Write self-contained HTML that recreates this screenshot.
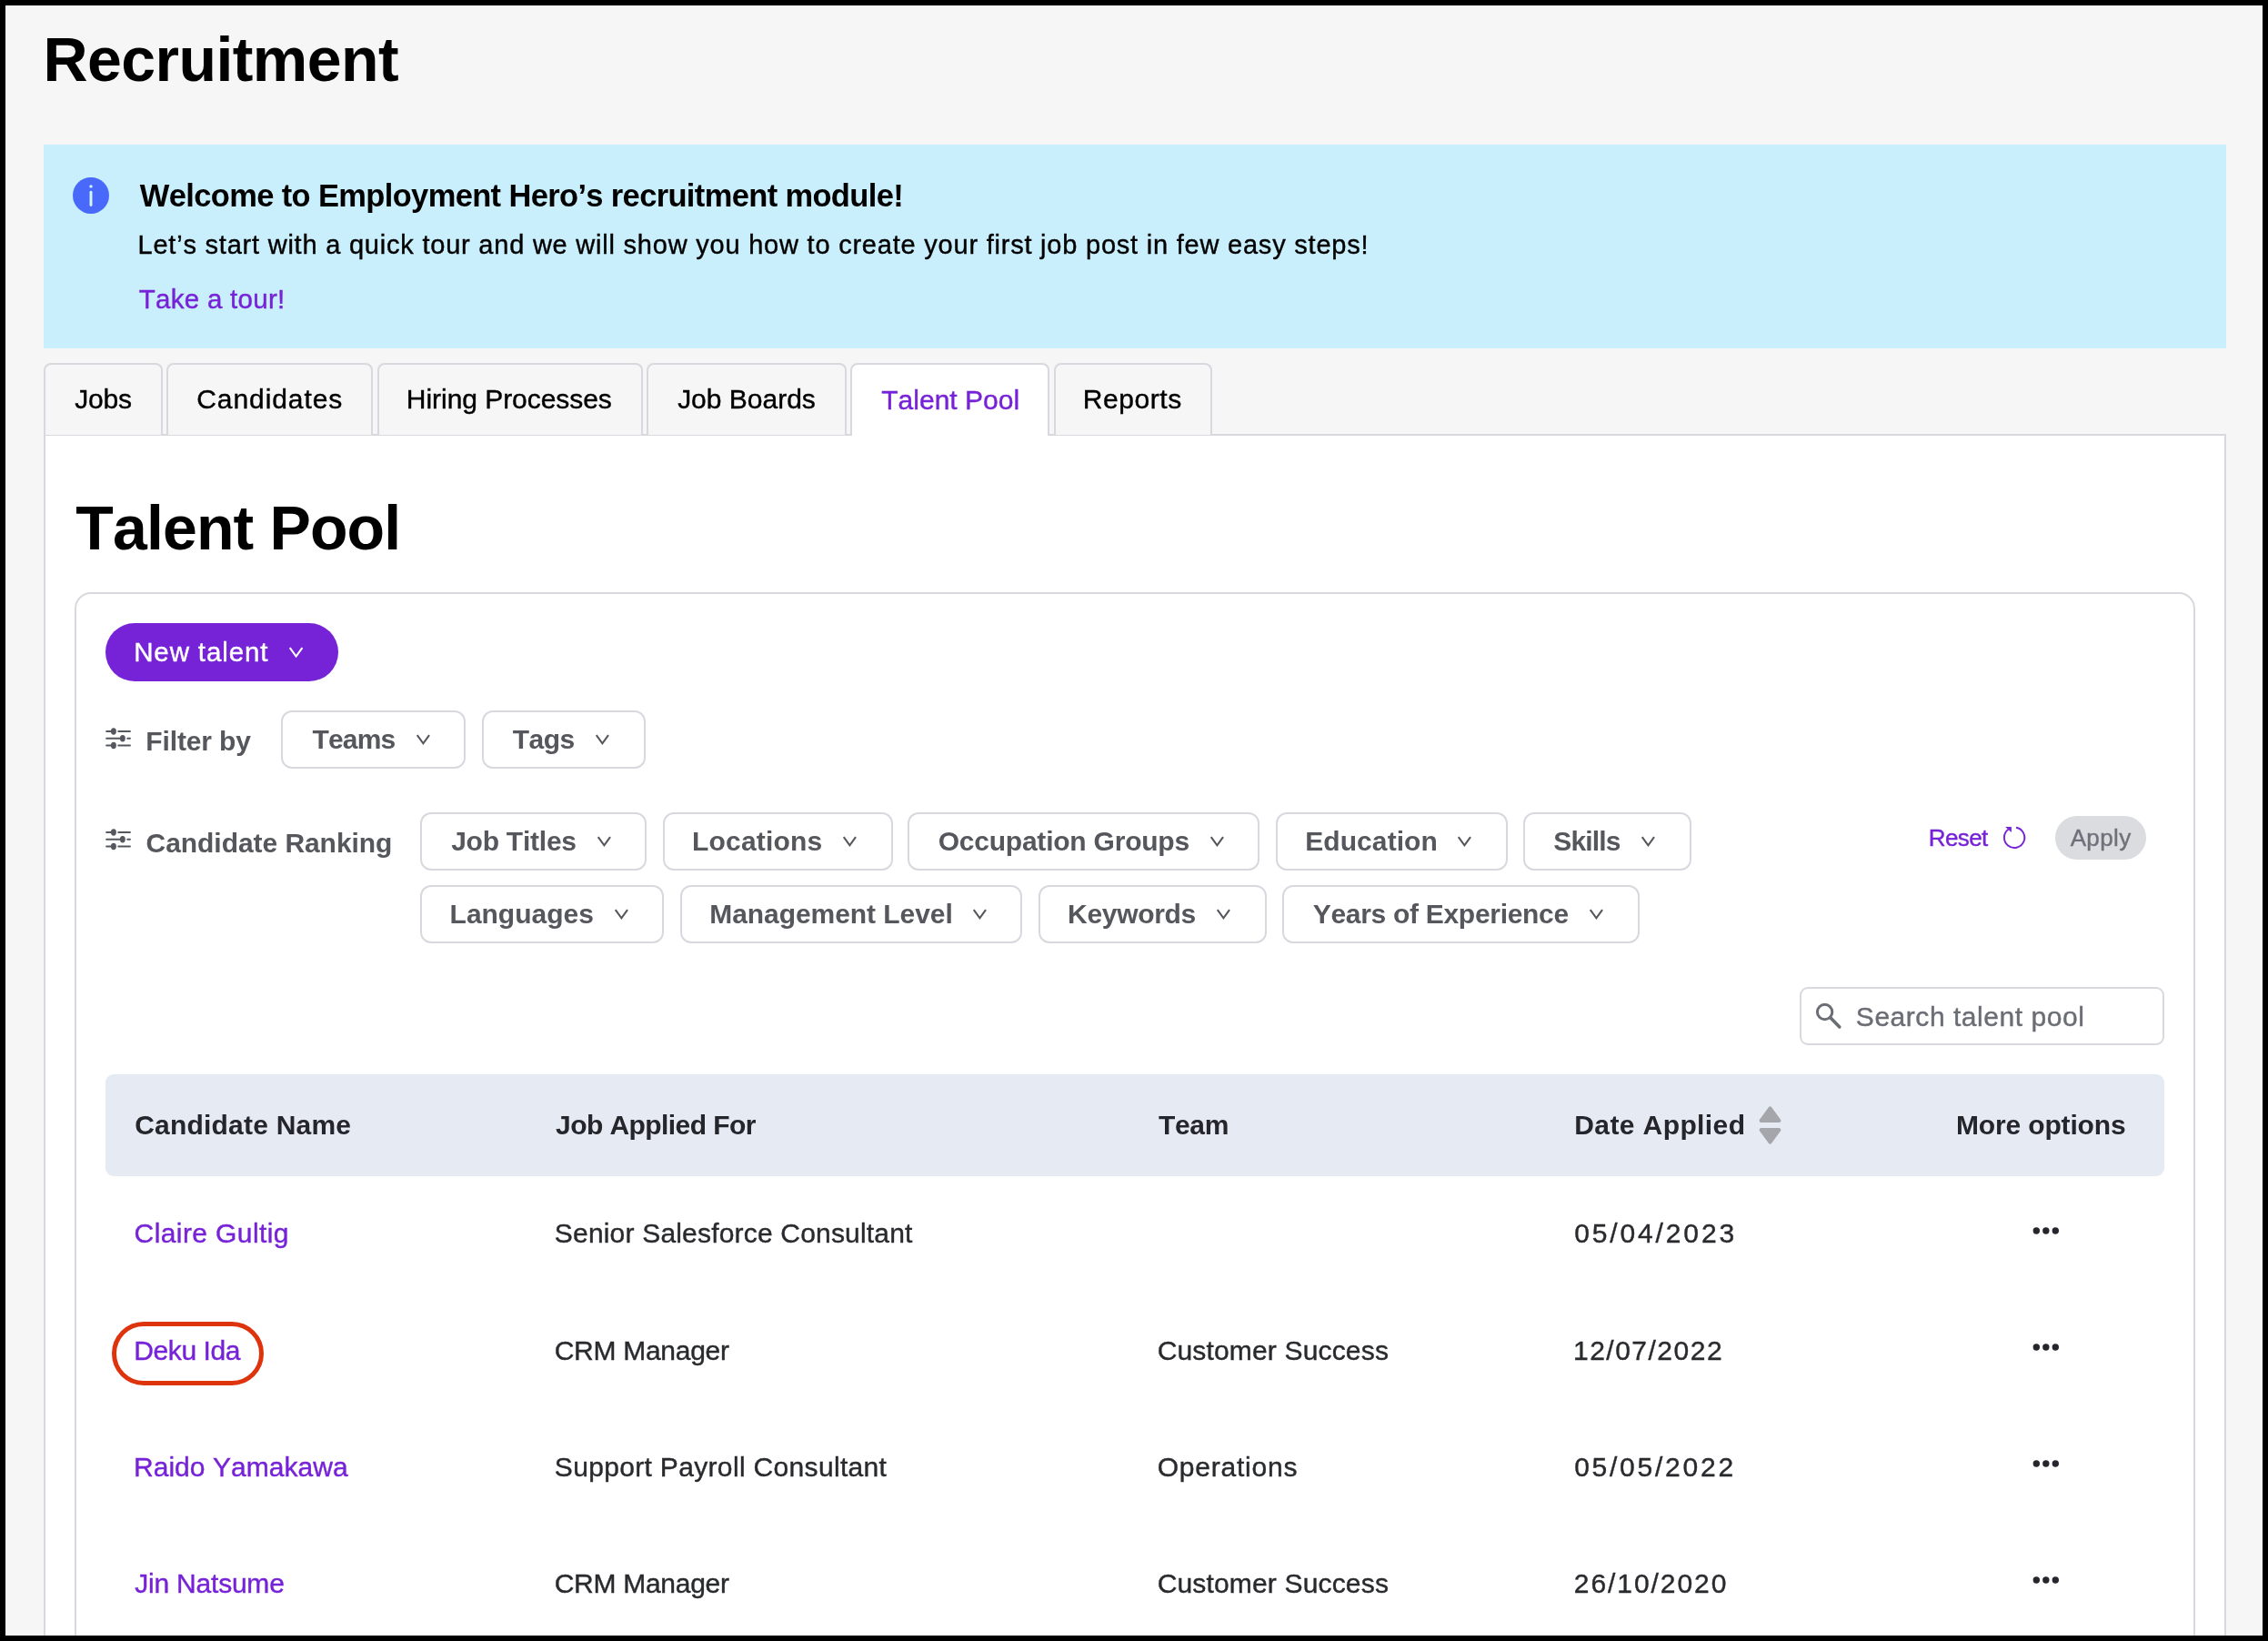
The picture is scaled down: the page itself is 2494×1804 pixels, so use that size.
<!DOCTYPE html>
<html lang="en"><head><meta charset="utf-8"><title>Recruitment - Talent Pool</title>
<style>
html,body{margin:0;padding:0;background:#000;}
body{width:2494px;height:1804px;position:relative;overflow:hidden;font-family:"Liberation Sans",sans-serif;font-kerning:none;}
.t{position:absolute;white-space:nowrap;line-height:1;font-kerning:none;margin:0;padding:0;font-weight:400;display:block;}
.b{position:absolute;display:block;}
#clip{position:absolute;left:6px;top:6px;width:2482px;height:1792px;overflow:hidden;}
#clip>#in{position:absolute;left:-6px;top:-6px;width:2494px;height:1804px;will-change:transform;}
</style></head><body><div id="clip"><div id="in">
<div class="b" style="left:6px;top:6px;width:2482px;height:1792px;background:#f6f6f6;"></div>
<h1 class="t" style="left:47.45px;top:31.00px;font-size:68px;font-weight:700;color:#000;letter-spacing:-0.557px;">Recruitment</h1>
<div class="b" style="left:48px;top:159px;width:2400px;height:224px;background:#c9eefc;"></div>
<svg class="b" style="left:80px;top:195px" width="40" height="40" viewBox="0 0 40 40"><circle cx="20" cy="19.9" r="20" fill="#4869fa"/><circle cx="20" cy="9.9" r="1.7" fill="#d6f8ff"/><rect x="18.55" y="14.8" width="2.9" height="17.2" rx="1.45" fill="#d6f8ff"/></svg>
<span class="t" style="left:153.87px;top:198.00px;font-size:34.5px;font-weight:700;color:#000;letter-spacing:-0.649px;">Welcome to Employment Hero’s recruitment module!</span>
<span class="t" style="left:151.52px;top:255.00px;font-size:29px;-webkit-text-stroke:0.4px;color:#000;letter-spacing:0.781px;">Let’s start with a quick tour and we will show you how to create your first job post in few easy steps!</span>
<a class="t" style="left:152.74px;top:314.00px;font-size:29.5px;-webkit-text-stroke:0.4px;color:#7622d7;letter-spacing:0.285px;">Take a tour!</a>
<div class="b" style="left:48px;top:477.1px;width:2400px;height:1330px;background:#fff;border:2px solid #d8d9de;box-sizing:border-box;"></div>
<div class="b" style="left:48px;top:399.2px;width:130.8px;height:78.5px;background:#f6f6f6;border:2px solid #d8d9de;border-bottom:none;border-radius:8px 8px 0 0;box-sizing:border-box;"></div>
<span class="t" style="left:82.33px;top:424.00px;font-size:30px;-webkit-text-stroke:0.4px;color:#000;letter-spacing:-0.272px;">Jobs</span>
<div class="b" style="left:183px;top:399.2px;width:227.2px;height:78.5px;background:#f6f6f6;border:2px solid #d8d9de;border-bottom:none;border-radius:8px 8px 0 0;box-sizing:border-box;"></div>
<span class="t" style="left:216.28px;top:424.00px;font-size:30px;-webkit-text-stroke:0.4px;color:#000;letter-spacing:0.915px;">Candidates</span>
<div class="b" style="left:414.5px;top:399.2px;width:292.29999999999995px;height:78.5px;background:#f6f6f6;border:2px solid #d8d9de;border-bottom:none;border-radius:8px 8px 0 0;box-sizing:border-box;"></div>
<span class="t" style="left:446.84px;top:424.00px;font-size:30px;-webkit-text-stroke:0.4px;color:#000;letter-spacing:-0.047px;">Hiring Processes</span>
<div class="b" style="left:710.8px;top:399.2px;width:220.0px;height:78.5px;background:#f6f6f6;border:2px solid #d8d9de;border-bottom:none;border-radius:8px 8px 0 0;box-sizing:border-box;"></div>
<span class="t" style="left:745.13px;top:424.00px;font-size:30px;-webkit-text-stroke:0.4px;color:#000;letter-spacing:-0.001px;">Job Boards</span>
<div class="b" style="left:935.1px;top:399.2px;width:219.10000000000002px;height:80px;background:#fff;border:2px solid #d8d9de;border-bottom:none;border-radius:8px 8px 0 0;box-sizing:border-box;"></div>
<span class="t" style="left:969.23px;top:425.00px;font-size:30px;-webkit-text-stroke:0.4px;color:#7622d7;letter-spacing:0.022px;">Talent Pool</span>
<div class="b" style="left:1158.5px;top:399.2px;width:174.70000000000005px;height:78.5px;background:#f6f6f6;border:2px solid #d8d9de;border-bottom:none;border-radius:8px 8px 0 0;box-sizing:border-box;"></div>
<span class="t" style="left:1190.84px;top:424.00px;font-size:30px;-webkit-text-stroke:0.4px;color:#000;letter-spacing:0.567px;">Reports</span>
<h2 class="t" style="left:83.34px;top:546.00px;font-size:68px;font-weight:700;color:#000;letter-spacing:-0.868px;">Talent Pool</h2>
<div class="b" style="left:82px;top:651px;width:2332px;height:1200px;background:#fff;border:2px solid #d8d9de;border-radius:18px;box-sizing:border-box;"></div>
<div class="b" style="left:116px;top:685px;width:256px;height:64px;background:#7622d7;border-radius:32px;"></div>
<span class="t" style="left:147.18px;top:702.00px;font-size:29.5px;-webkit-text-stroke:0.4px;color:#fff;letter-spacing:0.873px;">New talent</span>
<svg class="b" style="left:316.3px;top:709.7px" width="19.2" height="15.2" viewBox="-2 -2 19.2 15.2"><path d="M0.75 0.1 L7.6 9.549999999999999 L14.45 0.1" fill="none" stroke="#fff" stroke-width="2.1" stroke-linecap="butt" stroke-linejoin="miter"/></svg>
<svg class="b" style="left:116px;top:799.5px" width="30" height="24" viewBox="0 0 30 24"><g stroke="#55575e" stroke-width="2.1" stroke-linecap="round" fill="none"><path d="M1.2 4H8M14.3 4H26.9"/><path d="M1.2 11.8H18M24.3 11.8H26.9"/><path d="M1.2 19.5H8M14.3 19.5H26.9"/></g><g fill="#55575e"><ellipse cx="8.9" cy="4" rx="2.95" ry="3.7"/><ellipse cx="18.85" cy="11.8" rx="2.95" ry="3.7"/><ellipse cx="8.9" cy="19.5" rx="2.95" ry="3.7"/></g></svg>
<span class="t" style="left:160.29px;top:800.00px;font-size:30px;font-weight:700;color:#56575d;letter-spacing:-0.128px;">Filter by</span>
<div class="b" style="left:309.3px;top:781px;width:203.2px;height:64px;background:#fff;border:2px solid #d8d9de;border-radius:12px;box-sizing:border-box;"></div>
<span class="t" style="left:343.56px;top:798.00px;font-size:30px;font-weight:700;color:#56575d;letter-spacing:-0.872px;">Teams</span>
<svg class="b" style="left:456.1px;top:805.8px" width="18.8" height="14.9" viewBox="-2 -2 18.8 14.9"><path d="M0.75 0.1 L7.4 9.25 L14.05 0.1" fill="none" stroke="#56575d" stroke-width="2.1" stroke-linecap="butt" stroke-linejoin="miter"/></svg>
<div class="b" style="left:529.5px;top:781px;width:180.10000000000002px;height:64px;background:#fff;border:2px solid #d8d9de;border-radius:12px;box-sizing:border-box;"></div>
<span class="t" style="left:563.76px;top:798.00px;font-size:30px;font-weight:700;color:#56575d;letter-spacing:-0.517px;">Tags</span>
<svg class="b" style="left:653.2px;top:805.8px" width="18.8" height="14.9" viewBox="-2 -2 18.8 14.9"><path d="M0.75 0.1 L7.4 9.25 L14.05 0.1" fill="none" stroke="#56575d" stroke-width="2.1" stroke-linecap="butt" stroke-linejoin="miter"/></svg>
<svg class="b" style="left:116px;top:911.4px" width="30" height="24" viewBox="0 0 30 24"><g stroke="#55575e" stroke-width="2.1" stroke-linecap="round" fill="none"><path d="M1.2 4H8M14.3 4H26.9"/><path d="M1.2 11.8H18M24.3 11.8H26.9"/><path d="M1.2 19.5H8M14.3 19.5H26.9"/></g><g fill="#55575e"><ellipse cx="8.9" cy="4" rx="2.95" ry="3.7"/><ellipse cx="18.85" cy="11.8" rx="2.95" ry="3.7"/><ellipse cx="8.9" cy="19.5" rx="2.95" ry="3.7"/></g></svg>
<span class="t" style="left:160.57px;top:912.00px;font-size:30px;font-weight:700;color:#56575d;letter-spacing:-0.054px;">Candidate Ranking</span>
<div class="b" style="left:462px;top:893px;width:249.39999999999998px;height:64px;background:#fff;border:2px solid #d8d9de;border-radius:12px;box-sizing:border-box;"></div>
<span class="t" style="left:496.15px;top:910.00px;font-size:30px;font-weight:700;color:#56575d;letter-spacing:-0.238px;">Job Titles</span>
<svg class="b" style="left:655.0px;top:917.8px" width="18.8" height="14.9" viewBox="-2 -2 18.8 14.9"><path d="M0.75 0.1 L7.4 9.25 L14.05 0.1" fill="none" stroke="#56575d" stroke-width="2.1" stroke-linecap="butt" stroke-linejoin="miter"/></svg>
<div class="b" style="left:728.5px;top:893px;width:253.10000000000002px;height:64px;background:#fff;border:2px solid #d8d9de;border-radius:12px;box-sizing:border-box;"></div>
<span class="t" style="left:761.09px;top:910.00px;font-size:30px;font-weight:700;color:#56575d;letter-spacing:0.182px;">Locations</span>
<svg class="b" style="left:925.2px;top:917.8px" width="18.8" height="14.9" viewBox="-2 -2 18.8 14.9"><path d="M0.75 0.1 L7.4 9.25 L14.05 0.1" fill="none" stroke="#56575d" stroke-width="2.1" stroke-linecap="butt" stroke-linejoin="miter"/></svg>
<div class="b" style="left:998.3px;top:893px;width:387.20000000000005px;height:64px;background:#fff;border:2px solid #d8d9de;border-radius:12px;box-sizing:border-box;"></div>
<span class="t" style="left:1031.67px;top:910.00px;font-size:30px;font-weight:700;color:#56575d;letter-spacing:-0.222px;">Occupation Groups</span>
<svg class="b" style="left:1329.1px;top:917.8px" width="18.8" height="14.9" viewBox="-2 -2 18.8 14.9"><path d="M0.75 0.1 L7.4 9.25 L14.05 0.1" fill="none" stroke="#56575d" stroke-width="2.1" stroke-linecap="butt" stroke-linejoin="miter"/></svg>
<div class="b" style="left:1402.6px;top:893px;width:255.0px;height:64px;background:#fff;border:2px solid #d8d9de;border-radius:12px;box-sizing:border-box;"></div>
<span class="t" style="left:1435.19px;top:910.00px;font-size:30px;font-weight:700;color:#56575d;letter-spacing:0.083px;">Education</span>
<svg class="b" style="left:1601.1999999999998px;top:917.8px" width="18.8" height="14.9" viewBox="-2 -2 18.8 14.9"><path d="M0.75 0.1 L7.4 9.25 L14.05 0.1" fill="none" stroke="#56575d" stroke-width="2.1" stroke-linecap="butt" stroke-linejoin="miter"/></svg>
<div class="b" style="left:1674.5px;top:893px;width:185.20000000000005px;height:64px;background:#fff;border:2px solid #d8d9de;border-radius:12px;box-sizing:border-box;"></div>
<span class="t" style="left:1708.24px;top:910.00px;font-size:30px;font-weight:700;color:#56575d;letter-spacing:-0.858px;">Skills</span>
<svg class="b" style="left:1803.3px;top:917.8px" width="18.8" height="14.9" viewBox="-2 -2 18.8 14.9"><path d="M0.75 0.1 L7.4 9.25 L14.05 0.1" fill="none" stroke="#56575d" stroke-width="2.1" stroke-linecap="butt" stroke-linejoin="miter"/></svg>
<div class="b" style="left:462px;top:973px;width:268.20000000000005px;height:64px;background:#fff;border:2px solid #d8d9de;border-radius:12px;box-sizing:border-box;"></div>
<span class="t" style="left:494.59px;top:990.00px;font-size:30px;font-weight:700;color:#56575d;letter-spacing:-0.016px;">Languages</span>
<svg class="b" style="left:673.8000000000001px;top:997.8px" width="18.8" height="14.9" viewBox="-2 -2 18.8 14.9"><path d="M0.75 0.1 L7.4 9.25 L14.05 0.1" fill="none" stroke="#56575d" stroke-width="2.1" stroke-linecap="butt" stroke-linejoin="miter"/></svg>
<div class="b" style="left:747.6px;top:973px;width:376.69999999999993px;height:64px;background:#fff;border:2px solid #d8d9de;border-radius:12px;box-sizing:border-box;"></div>
<span class="t" style="left:780.19px;top:990.00px;font-size:30px;font-weight:700;color:#56575d;letter-spacing:-0.052px;">Management Level</span>
<svg class="b" style="left:1067.8999999999999px;top:997.8px" width="18.8" height="14.9" viewBox="-2 -2 18.8 14.9"><path d="M0.75 0.1 L7.4 9.25 L14.05 0.1" fill="none" stroke="#56575d" stroke-width="2.1" stroke-linecap="butt" stroke-linejoin="miter"/></svg>
<div class="b" style="left:1141.5px;top:973px;width:251.0999999999999px;height:64px;background:#fff;border:2px solid #d8d9de;border-radius:12px;box-sizing:border-box;"></div>
<span class="t" style="left:1174.09px;top:990.00px;font-size:30px;font-weight:700;color:#56575d;letter-spacing:-0.320px;">Keywords</span>
<svg class="b" style="left:1336.1999999999998px;top:997.8px" width="18.8" height="14.9" viewBox="-2 -2 18.8 14.9"><path d="M0.75 0.1 L7.4 9.25 L14.05 0.1" fill="none" stroke="#56575d" stroke-width="2.1" stroke-linecap="butt" stroke-linejoin="miter"/></svg>
<div class="b" style="left:1409.7px;top:973px;width:393.0px;height:64px;background:#fff;border:2px solid #d8d9de;border-radius:12px;box-sizing:border-box;"></div>
<span class="t" style="left:1443.79px;top:990.00px;font-size:30px;font-weight:700;color:#56575d;letter-spacing:-0.304px;">Years of Experience</span>
<svg class="b" style="left:1746.3px;top:997.8px" width="18.8" height="14.9" viewBox="-2 -2 18.8 14.9"><path d="M0.75 0.1 L7.4 9.25 L14.05 0.1" fill="none" stroke="#56575d" stroke-width="2.1" stroke-linecap="butt" stroke-linejoin="miter"/></svg>
<a class="t" style="left:2120.87px;top:908.00px;font-size:26px;-webkit-text-stroke:0.4px;color:#7622d7;letter-spacing:-0.649px;">Reset</a>
<svg class="b" style="left:2201px;top:906px" width="28" height="28" viewBox="0 0 28 28"><path d="M16.04 3.77 A11.2 11.2 0 1 1 7.45 5.8" fill="none" stroke="#7622d7" stroke-width="1.9"/><path d="M4.1 3.1 H10.85 V9.1 Z" fill="#7622d7"/></svg>
<div class="b" style="left:2260px;top:897px;width:100px;height:47.8px;background:#dbdce0;border-radius:24px;"></div>
<span class="t" style="left:2276.65px;top:908.00px;font-size:26px;-webkit-text-stroke:0.4px;color:#6f717a;letter-spacing:0.366px;">Apply</span>
<div class="b" style="left:1979.3px;top:1085.2px;width:400.5px;height:63.5px;background:#fff;border:2px solid #d8d9de;border-radius:9px;box-sizing:border-box;"></div>
<svg class="b" style="left:1995px;top:1101px" width="32" height="32" viewBox="0 0 32 32"><circle cx="11.6" cy="11.5" r="8.2" fill="none" stroke="#6b6d75" stroke-width="3"/><path d="M17.8 17.7 L27.8 27.9" stroke="#6b6d75" stroke-width="3.6" stroke-linecap="round"/></svg>
<span class="t" style="left:2040.84px;top:1103.00px;font-size:30px;-webkit-text-stroke:0.4px;color:#6b6d75;letter-spacing:0.538px;">Search talent pool</span>
<div class="b" style="left:116px;top:1181px;width:2263.5px;height:112px;background:#e6eaf2;border-radius:9px;"></div>
<span class="t" style="left:148.17px;top:1222.00px;font-size:30px;font-weight:700;color:#25262b;letter-spacing:0.215px;">Candidate Name</span>
<span class="t" style="left:611.05px;top:1222.00px;font-size:30px;font-weight:700;color:#25262b;letter-spacing:-0.573px;">Job Applied For</span>
<span class="t" style="left:1274.06px;top:1222.00px;font-size:30px;font-weight:700;color:#25262b;letter-spacing:-0.357px;">Team</span>
<span class="t" style="left:1731.29px;top:1222.00px;font-size:30px;font-weight:700;color:#25262b;letter-spacing:0.394px;">Date Applied</span>
<span class="t" style="left:2150.99px;top:1222.00px;font-size:30px;font-weight:700;color:#25262b;letter-spacing:-0.153px;">More options</span>
<svg class="b" style="left:1932px;top:1214px" width="30" height="46" viewBox="0 0 30 46"><g fill="#a5a6ac" stroke="#a5a6ac" stroke-width="4" stroke-linejoin="round"><path d="M14.5 4.3 L24.4 18 H4.6 Z"/><path d="M14.5 41.7 L24.4 28 H4.6 Z"/></g></svg>
<a class="t" style="left:147.58px;top:1341.00px;font-size:30px;-webkit-text-stroke:0.4px;color:#7622d7;letter-spacing:0.408px;">Claire Gultig</a>
<span class="t" style="left:609.84px;top:1341.00px;font-size:30px;-webkit-text-stroke:0.4px;color:#292a2e;letter-spacing:0.186px;">Senior Salesforce Consultant</span>
<span class="t" style="left:1731.13px;top:1341.00px;font-size:30px;-webkit-text-stroke:0.4px;color:#292a2e;letter-spacing:2.872px;">05/04/2023</span>
<svg class="b" style="left:2234px;top:1348.1px" width="32" height="10" viewBox="0 0 32 10"><g fill="#24262c"><circle cx="5.3" cy="5" r="3.7"/><circle cx="15.8" cy="5" r="3.7"/><circle cx="26.3" cy="5" r="3.7"/></g></svg>
<a class="t" style="left:147.24px;top:1470.00px;font-size:30px;-webkit-text-stroke:0.4px;color:#7622d7;letter-spacing:-0.402px;">Deku Ida</a>
<span class="t" style="left:609.68px;top:1470.00px;font-size:30px;-webkit-text-stroke:0.4px;color:#292a2e;letter-spacing:-0.274px;">CRM Manager</span>
<span class="t" style="left:1272.68px;top:1470.00px;font-size:30px;-webkit-text-stroke:0.4px;color:#292a2e;letter-spacing:0.164px;">Customer Success</span>
<span class="t" style="left:1730.01px;top:1470.00px;font-size:30px;-webkit-text-stroke:0.4px;color:#292a2e;letter-spacing:1.494px;">12/07/2022</span>
<svg class="b" style="left:2234px;top:1476.2px" width="32" height="10" viewBox="0 0 32 10"><g fill="#24262c"><circle cx="5.3" cy="5" r="3.7"/><circle cx="15.8" cy="5" r="3.7"/><circle cx="26.3" cy="5" r="3.7"/></g></svg>
<a class="t" style="left:146.94px;top:1598.00px;font-size:30px;-webkit-text-stroke:0.4px;color:#7622d7;letter-spacing:0.049px;">Raido Yamakawa</a>
<span class="t" style="left:609.84px;top:1598.00px;font-size:30px;-webkit-text-stroke:0.4px;color:#292a2e;letter-spacing:0.329px;">Support Payroll Consultant</span>
<span class="t" style="left:1272.78px;top:1598.00px;font-size:30px;-webkit-text-stroke:0.4px;color:#292a2e;letter-spacing:0.773px;">Operations</span>
<span class="t" style="left:1731.13px;top:1598.00px;font-size:30px;-webkit-text-stroke:0.4px;color:#292a2e;letter-spacing:2.759px;">05/05/2022</span>
<svg class="b" style="left:2234px;top:1604.3px" width="32" height="10" viewBox="0 0 32 10"><g fill="#24262c"><circle cx="5.3" cy="5" r="3.7"/><circle cx="15.8" cy="5" r="3.7"/><circle cx="26.3" cy="5" r="3.7"/></g></svg>
<a class="t" style="left:148.33px;top:1726.00px;font-size:30px;-webkit-text-stroke:0.4px;color:#7622d7;letter-spacing:-0.223px;">Jin Natsume</a>
<span class="t" style="left:609.68px;top:1726.00px;font-size:30px;-webkit-text-stroke:0.4px;color:#292a2e;letter-spacing:-0.274px;">CRM Manager</span>
<span class="t" style="left:1272.68px;top:1726.00px;font-size:30px;-webkit-text-stroke:0.4px;color:#292a2e;letter-spacing:0.164px;">Customer Success</span>
<span class="t" style="left:1730.79px;top:1726.00px;font-size:30px;-webkit-text-stroke:0.4px;color:#292a2e;letter-spacing:1.937px;">26/10/2020</span>
<svg class="b" style="left:2234px;top:1732.4px" width="32" height="10" viewBox="0 0 32 10"><g fill="#24262c"><circle cx="5.3" cy="5" r="3.7"/><circle cx="15.8" cy="5" r="3.7"/><circle cx="26.3" cy="5" r="3.7"/></g></svg>
<div class="b" style="left:123.05px;top:1453.05px;width:166.85px;height:69.85px;border:5px solid #dd340d;border-radius:35px;box-sizing:border-box;"></div>
</div></div></body></html>
